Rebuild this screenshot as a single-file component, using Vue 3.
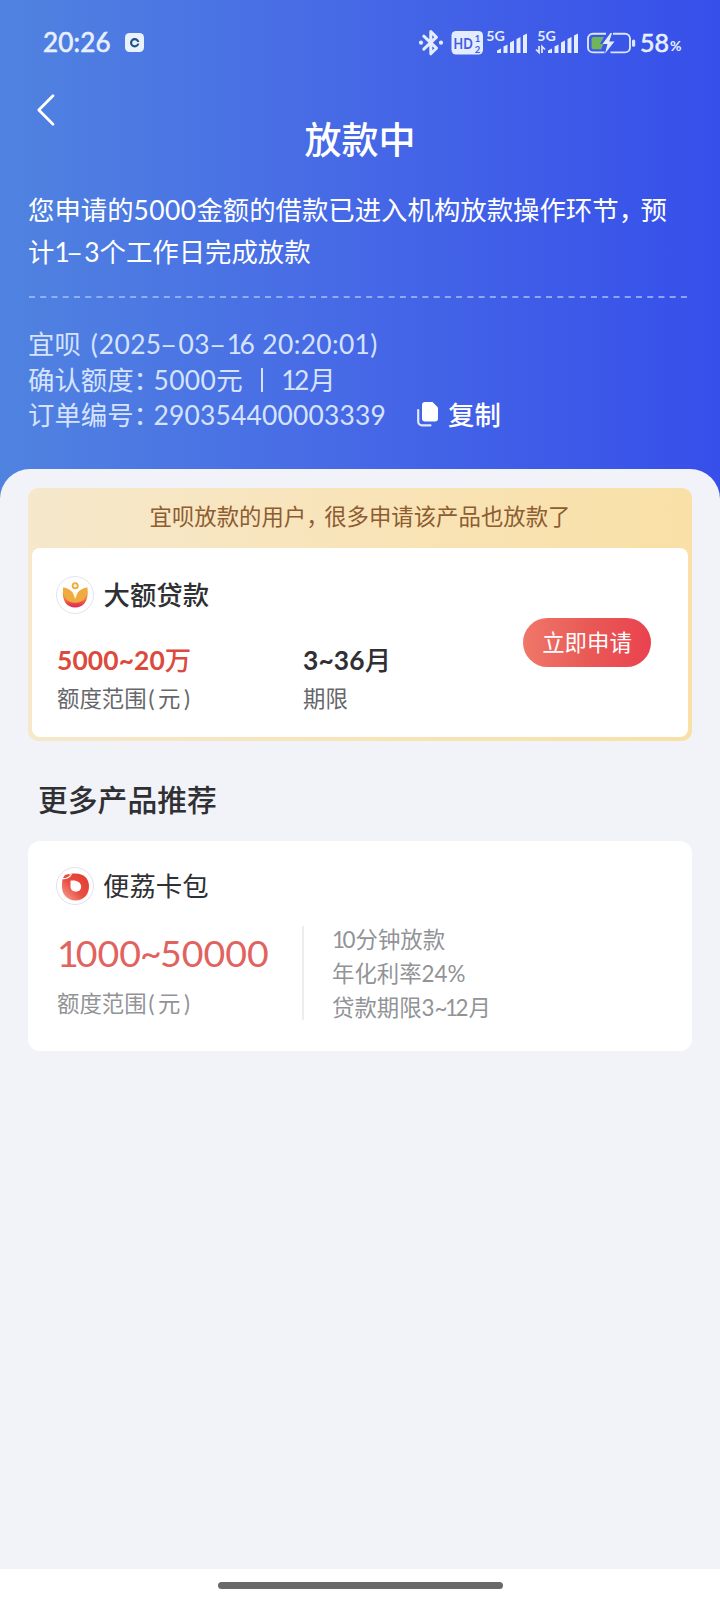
<script setup>
const bars = [
  { x: 0, h: 4.5 },
  { x: 6.5, h: 8.5 },
  { x: 13, h: 12.5 },
  { x: 19.5, h: 16 },
  { x: 26, h: 19.5 },
]
const barPath = (b) => `M${b.x} 20V${22 - b.h}L${b.x + 4} ${20 - b.h}V20Z`
</script>

<template>
  <div class="screen">
    <header class="hero">
      <div class="status">
        <span class="time">20:26</span>
        <svg class="app-dot" width="19" height="19" viewBox="0 0 19 19">
          <rect width="19" height="19" rx="4.5" fill="#e9f1fb" />
          <circle cx="9.7" cy="9.8" r="3.6" fill="none" stroke="#1d4f88" stroke-width="2.2" />
          <path d="M10 9.8h5" stroke="#e9f1fb" stroke-width="1.6" />
        </svg>
        <svg class="icons" width="218" height="30" viewBox="418 26 218 30">
          <path d="M423.8 35.200L436.500 47.200L430.800 52.800V30.600L436.500 36.200L423.800 48.200" fill="none" stroke="#e4ecff" stroke-width="3" stroke-linejoin="round" stroke-linecap="round" />
          <circle cx="421" cy="41.700" r="2.100" fill="#e4ecff" />
          <circle cx="441" cy="41.700" r="2.100" fill="#e4ecff" />
          <rect x="451.5" y="30" width="31.5" height="23.5" rx="4.5" fill="#e4ecff" />
          <g fill="#405ce2" class="bold">
            <text x="453.6" y="47.6" font-size="15.5" textLength="19" lengthAdjust="spacingAndGlyphs">HD</text>
            <text x="474.800" y="40.500" font-size="9.500">1</text>
            <text x="474.800" y="51.600" font-size="9.500">2</text>
          </g>
          <g fill="#e4ecff" class="bold">
            <text x="486.3" y="40.2" font-size="13.5" textLength="18.5" lengthAdjust="spacingAndGlyphs">5G</text>
            <text x="537.3" y="40.2" font-size="13.5" textLength="18.5" lengthAdjust="spacingAndGlyphs">5G</text>
          </g>
          <g fill="#e4ecff" transform="translate(497 32)">
            <path v-for="b in bars" :key="b.x" :d="barPath(b)" />
          </g>
          <g fill="#e4ecff" transform="translate(548 32)">
            <path v-for="b in bars" :key="b.x" :d="barPath(b)" />
          </g>
          <path d="M539 45v6.5l-3-3M542 52v-6.5l3 3" fill="none" stroke="#e4ecff" stroke-width="1.7" />
          <path d="M606 32.8h-13a5 5 0 0 0-5 5v8.6a5 5 0 0 0 5 5h11.5M613 32.8h12a5 5 0 0 1 5 5v8.6a5 5 0 0 1-5 5h-14.500" fill="none" stroke="#dce6ff" stroke-width="1.9" />
          <path d="M593.5 36h10.500l-4 7h3.500l-2.500 5.200h-7.500a2 2 0 0 1-2-2v-8.200a2 2 0 0 1 2-2z" fill="#6fb55a" />
          <path d="M610.5 32L602.5 43h5l-2.500 9.500L614.500 40.500h-5.200l2.700-8.500z" fill="#e4ecff" />
          <rect x="632" y="38.500" width="3.200" height="7.300" rx="1.500" fill="#dce6ff" />
        </svg>
        <span class="level">58</span><span class="pct">%</span>
      </div>

      <svg class="back" width="20" height="34" viewBox="0 0 20 34">
        <path d="M17 2.800L2.800 17L17 31.200" fill="none" stroke="#fff" stroke-width="2.800" stroke-linecap="round" stroke-linejoin="round" />
      </svg>
      <h1>放款中</h1>

      <p class="notice">
        <span class="line">您申请的<span class="digits">5000</span>金额的借款已进入机构放款操作环节<span class="comma">，</span>预</span>
        <span class="line">计<span class="one">1</span><span class="dash">-</span>3个工作日完成放款</span>
      </p>
      <svg class="rule" width="664" height="2" viewBox="0 0 664 2">
        <path d="M1 1H660" stroke="#a9c0fb" stroke-opacity=".75" stroke-width="2" stroke-dasharray="6 5.240" />
      </svg>

      <div class="info">
        <div class="row">宜呗<span class="open">(</span><span class="stamp">2025<span class="dash">-</span>03<span class="dash">-</span><span class="one">1</span>6 20:20:01)</span></div>
        <div class="row">确认额度<span class="colon">：</span><span class="digits">5000</span>元<span class="pipe"></span><span class="one">1</span>2月</div>
        <div class="row"><span>订单编号</span><span class="colon">：</span><span class="order">290354400003339</span><span class="copy"><svg width="22" height="25" viewBox="0 0 22 25">
              <path d="M8 0h7.500L21 5.500V16.500a3 3 0 0 1-3 3H8a3 3 0 0 1-3-3V3a3 3 0 0 1 3-3z" fill="#fff" />
              <path d="M1.200 8v11.500a3.800 3.800 0 0 0 3.800 3.800h8.500" fill="none" stroke="#dfe9ff" stroke-width="2.200" stroke-linecap="round" />
            </svg><span>复制</span></span></div>
      </div>
    </header>

    <main class="sheet">
      <section class="promo">
        <div class="banner">宜呗放款的用户<span class="comma">，</span>很多申请该产品也放款了</div>
        <div class="offer">
          <div class="facts">
            <div class="brand">
              <svg width="38" height="38" viewBox="0 0 38 38">
                <defs>
                  <linearGradient id="bowl" x1="0" y1="0" x2="0" y2="1">
                    <stop offset=".4" stop-color="#f08a3c" />
                    <stop offset=".75" stop-color="#e8484a" />
                    <stop offset="1" stop-color="#d9265c" />
                  </linearGradient>
                </defs>
                <circle cx="19" cy="19" r="18.500" fill="#fff" stroke="#e3e3ee" />
                <path d="M7 15C6 25 11 31.500 19.200 31.500S32.500 25 31.500 15L19.200 25z" fill="url(#bowl)" />
                <path d="M7 11.500C13 12 18.200 16 19.200 22C20.200 16 25.500 12 31.500 11.500C32.500 20 28 26.800 19.200 26.800S6 20 7 11.500z" fill="#efaa40" />
                <path d="M19.200 15.500L16.800 16.500L19.200 23L21.600 16.500z" fill="#fff6df" />
                <circle cx="19.200" cy="9.800" r="2.600" fill="#fff3d8" stroke="#edac3c" stroke-width="1.800" />
              </svg>
              <span class="strong">大额贷款</span>
            </div>
            <div class="pair">
              <div class="cell">
                <div class="value red"><b>5000~20</b>万</div>
                <div class="label">额度范围<span class="lp">(</span>元<span class="rp">)</span></div>
              </div>
              <div class="cell">
                <div class="value"><b>3~36</b>月</div>
                <div class="label">期限</div>
              </div>
            </div>
          </div>
          <button class="apply">立即申请</button>
        </div>
      </section>

      <h2>更多产品推荐</h2>

      <section class="product">
        <div class="brand">
          <svg width="38" height="38" viewBox="0 0 38 38">
            <defs>
              <linearGradient id="ring" x1="1" y1="0" x2="0" y2="1">
                <stop offset="0" stop-color="#e23a2e" />
                <stop offset=".55" stop-color="#ea4f43" />
                <stop offset="1" stop-color="#f7a79c" />
              </linearGradient>
            </defs>
            <circle cx="19" cy="19" r="18.500" fill="#fff" stroke="#e1e1ee" />
            <path d="M15 6.800C26 5 33 10 33 19.500C33 28 27 33.500 19.500 33.500S6 28 6 20C6 16 6 13 7 10.500z" fill="url(#ring)" />
            <path d="M14.500 13.800C20 12.800 25.200 15 25.200 20a5.400 5.400 0 0 1-10.700 0z" fill="#fff" />
            <path d="M6 11.500C9 12.200 13.500 11 15.500 7" fill="none" stroke="#fff" stroke-width="1.200" />
            <path d="M7.500 9.800C8.500 8 11 7 13.500 7C12.500 9 10 10.200 7.500 9.800z" fill="#e8493e" />
          </svg>
          <span>便荔卡包</span>
        </div>
        <div class="detail">
          <div class="amount">
            <div class="big"><span class="first">1</span>000<span class="tilde">~</span>50000</div>
            <div class="label">额度范围<span class="lp">(</span>元<span class="rp">)</span></div>
          </div>
          <ul class="terms">
            <li><span class="one">1</span>0分钟放款</li>
            <li>年化利率24%</li>
            <li>贷款期限3<span class="one">~1</span>2月</li>
          </ul>
        </div>
      </section>
    </main>

    <footer class="nav"><div class="handle"></div></footer>
  </div>
</template>

<style>
body {
  margin: 0;
}
</style>

<style scoped>
.screen {
  display: flex;
  flex-direction: column;
  width: 720px;
  height: 1600px;
  overflow: hidden;
  background: linear-gradient(90deg, #5083e0 0%, #4668e6 50%, #364fea 100%);
  font-family: Lato, "Noto Sans CJK SC", sans-serif;
  font-size: 26.4px;
}
.bold {
  font-weight: 700;
}
.hero {
  display: flex;
  flex-direction: column;
  height: 469px;
  flex: none;
  color: #fff;
}
.status {
  display: flex;
  align-items: center;
  height: 30px;
  margin-top: 27px;
  padding-left: 43px;
  color: #e8f0ff;
}
.time {
  width: 82px;
  font-size: 26px;
  -webkit-text-stroke: 0.6px #e8f0ff;
  letter-spacing: 0.2px;
  line-height: 30px;
}
.icons {
  margin-left: 274px;
}
.level {
  margin-left: 4px;
  font-size: 25px;
  -webkit-text-stroke: 0.6px #e8f0ff;
  line-height: 30px;
}
.pct {
  margin: 7px 0 0 1px;
  font-size: 14px;
  font-weight: 700;
}
.back {
  margin: 36px 0 0 36px;
}
h1 {
  margin: -11px 0 0;
  font-size: 37px;
  font-weight: 500;
  line-height: 48px;
  text-align: center;
}
.notice {
  margin: 25px 0 0 28px;
  line-height: 42px;
  white-space: nowrap;
}
.line {
  display: block;
  height: 42px;
}
.digits {
  letter-spacing: 0.4px;
}
.comma {
  letter-spacing: -4.500px;
}
.colon {
  letter-spacing: -6.500px;
}
.one {
  letter-spacing: -2.500px;
}
.dash {
  display: inline-block;
  width: 17px;
  text-align: center;
  letter-spacing: 0;
  transform: translateX(-1px) scale(1.800, 0.900);
}
.stamp {
  letter-spacing: 0.350px;
}
.order {
  letter-spacing: 0.200px;
}
.rule {
  margin: 23px 0 0 28px;
}
.info {
  margin: 28px 0 0 28px;
  color: #d6e3ff;
}
.row {
  display: flex;
  height: 35.600px;
  line-height: 36.600px;
  white-space: pre;
}
.open {
  margin: 0 1px 0 10px;
}
.pipe {
  width: 2.500px;
  height: 24px;
  margin: 6px 18px 0 18px;
  background: #d6e3ff;
}
.copy {
  display: flex;
  align-items: center;
  gap: 9px;
  margin-left: 31px;
  color: #fff;
  font-weight: 500;
}
.sheet {
  flex: 1;
  padding: 19px 28px 0;
  border-radius: 30px 30px 0 0;
  background: #f2f3f8;
  color: #2f3033;
}
.promo {
  box-sizing: border-box;
  height: 253px;
  padding: 0 4px 4px;
  border-radius: 10px;
  background: linear-gradient(90deg, #f5e8cb, #f9e4b9 50%, #f8e0a6);
}
.banner {
  height: 60px;
  color: #8d5c31;
  font-size: 22.400px;
  line-height: 58px;
  text-align: center;
}
.offer {
  display: flex;
  justify-content: space-between;
  box-sizing: border-box;
  height: 189px;
  padding: 27px 37px 0 25px;
  border-radius: 8px;
  background: #fff;
}
.brand {
  display: flex;
  align-items: center;
  gap: 9.500px;
  height: 40px;
  line-height: 41px;
}
.brand svg {
  margin-left: -1px;
}
.strong {
  font-weight: 500;
}
.pair {
  display: flex;
  margin-top: 26px;
}
.cell {
  width: 246px;
}
.cell + .cell {
  width: 140px;
}
.value {
  height: 38px;
  font-weight: 500;
  line-height: 38px;
}
.value b {
  font-weight: 700;
  letter-spacing: 0.100px;
}
.value.red {
  color: #dc4a3d;
}
.label {
  color: #66676b;
  font-size: 22.400px;
  line-height: 40px;
}
.lp {
  margin: 0 3.500px 0 2px;
}
.rp {
  margin-left: 3.500px;
}
.apply {
  flex: none;
  width: 128px;
  height: 49px;
  margin-top: 43px;
  padding: 0;
  border: 0;
  border-radius: 25px;
  background: linear-gradient(90deg, #f0776a, #e95a56 50%, #ea424f);
  color: #fff;
  font: inherit;
  font-size: 22.400px;
  line-height: 50px;
}
h2 {
  margin: 37px 0 0 10px;
  font-size: 29.800px;
  font-weight: 500;
  line-height: 44px;
}
.product {
  box-sizing: border-box;
  height: 210px;
  margin-top: 19px;
  padding: 25px 29px 0;
  border-radius: 12px;
  background: #fff;
}
.product .brand {
  gap: 9px;
}
.detail {
  display: flex;
  margin-top: 20px;
}
.amount {
  box-sizing: border-box;
  width: 247px;
  height: 94px;
  border-right: 2px solid #ededf0;
  white-space: nowrap;
}
.big {
  height: 56px;
  color: #e1635f;
  font-size: 37.500px;
  line-height: 54px;
}
.first {
  letter-spacing: -3px;
}
.tilde {
  display: inline-block;
  width: 20px;
  margin-left: -1px;
  letter-spacing: -3px;
}
.amount .label {
  margin-top: 2px;
  color: #929397;
}
.terms {
  margin: -3px 0 0;
  padding: 0 0 0 28px;
  color: #929397;
  font-size: 22.400px;
  line-height: 34px;
  list-style: none;
}
.nav {
  flex: none;
  height: 31px;
  background: #fff;
}
.handle {
  width: 285px;
  height: 7px;
  margin: 13px auto 0;
  border-radius: 4px;
  background: #696969;
}
</style>
